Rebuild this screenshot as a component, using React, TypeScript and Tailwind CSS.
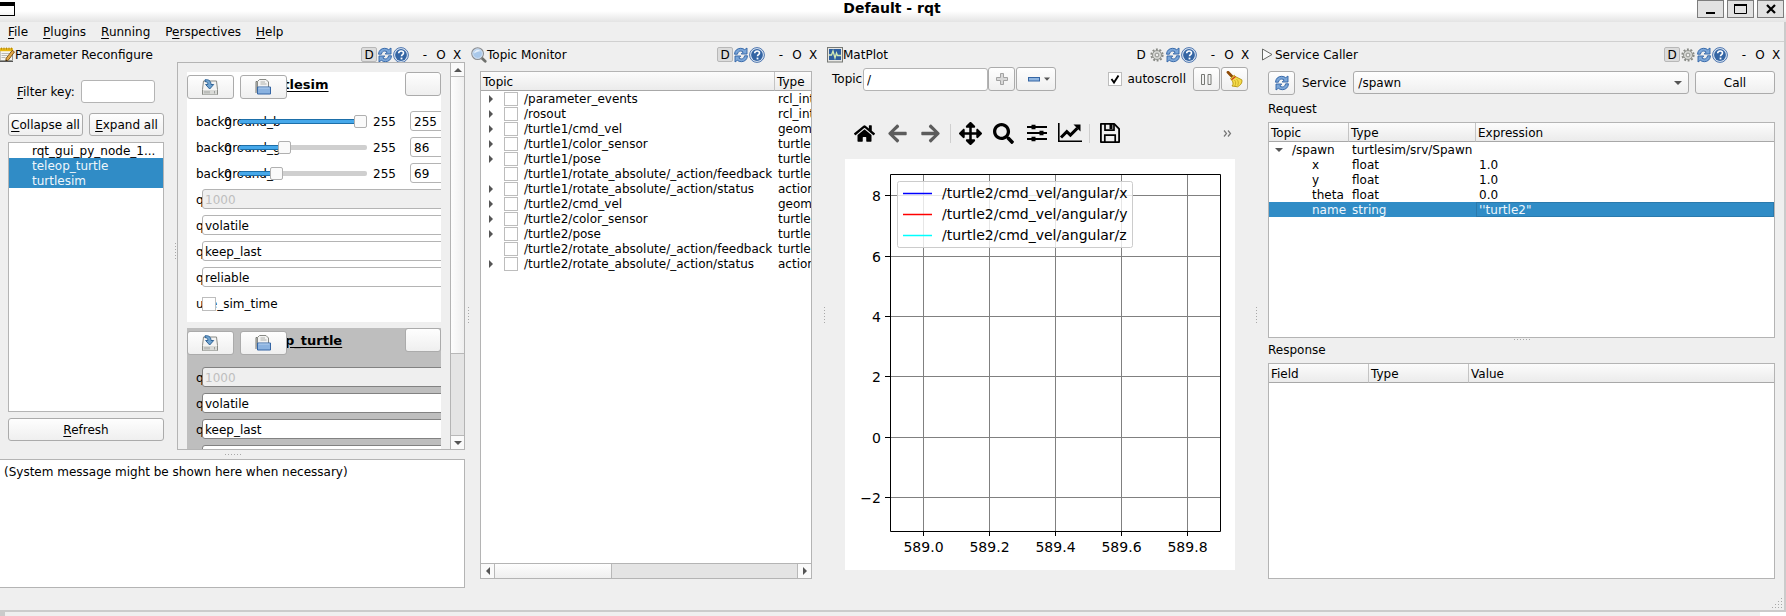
import React from "react";
import { FaHome, FaArrowLeft, FaArrowRight, FaArrowsAlt, FaSearch } from "react-icons/fa";

/* ---------- icons ---------- */

const RefreshIcon = () => (
  <svg width="16" height="16" viewBox="0 0 16 16" aria-hidden="true">
    <path d="M1.5 7.2C1.7 3.4 4.4 1.3 7.6 1.3c1.7 0 3 .5 4.1 1.4L14 1v6H8.2l2-2c-.8-.6-1.6-.9-2.6-.9-1.7 0-2.8 1.1-3.2 3.1z" fill="#7ba6d8" stroke="#2f62a5" strokeWidth="0.9" />
    <path d="M14.5 8.8c-.2 3.8-2.9 5.9-6.1 5.9-1.7 0-3-.5-4.1-1.4L2 15V9h5.8l-2 2c.8.6 1.6.9 2.6.9 1.7 0 2.8-1.1 3.2-3.1z" fill="#7ba6d8" stroke="#2f62a5" strokeWidth="0.9" />
  </svg>
);

const HelpIcon = () => (
  <svg width="16" height="16" viewBox="0 0 16 16" aria-hidden="true">
    <circle cx="8" cy="8" r="7.4" fill="#dfe8f4" stroke="#3b68a6" strokeWidth="0.9" />
    <circle cx="8" cy="8" r="5.9" fill="#3465a4" />
    <path d="M5.7 6.2c0-1.4 1-2.2 2.4-2.2s2.4.8 2.4 2c0 1.6-2 1.7-2 3.3" fill="none" stroke="#fff" strokeWidth="1.6" />
    <rect x="7.6" y="10.6" width="1.8" height="1.8" fill="#fff" />
  </svg>
);

const GearIcon = () => (
  <svg width="14" height="14" viewBox="0 0 14 14" aria-hidden="true">
    <circle cx="7" cy="7" r="5.6" fill="none" stroke="#888a85" strokeWidth="2" strokeDasharray="1.9 1.62" />
    <circle cx="7" cy="7" r="4.5" fill="#d6d7d4" stroke="#888a85" strokeWidth="0.9" />
    <circle cx="7" cy="7" r="1.9" fill="#efefef" stroke="#888a85" strokeWidth="0.9" />
  </svg>
);

const NotepadIcon = () => (
  <svg width="15" height="16" viewBox="0 0 15 16" aria-hidden="true">
    <path d="M0 2h12.5v11.5H0z" fill="#f5f5f2" stroke="#8b8d88" strokeWidth="0.9" />
    <path d="M0 1.2h13v3H0z" fill="#e9b913" />
    <path d="M1.5 .6v2M4 .6v2M6.5 .6v2M9 .6v2M11.5 .6v2" stroke="#b8860b" strokeWidth="1" />
    <path d="M1.5 6.5h8M1.5 8.5h6M1.5 10.5h4" stroke="#a9aba6" strokeWidth="0.8" />
    <path d="M12.2 3.4l2.3 1.5-6 8-2.8 1.5.5-3.2z" fill="#e2a94a" stroke="#7a4f10" strokeWidth="0.9" />
    <path d="M5.7 14.4l.3-1.8 1.2.9z" fill="#222" />
    <path d="M0 14.5h13" stroke="#555" strokeWidth="1" />
  </svg>
);

const MagnifierIcon = () => (
  <svg width="16" height="16" viewBox="0 0 16 16" aria-hidden="true">
    <path d="M10.8 11l3.400 3.200" stroke="#6f716d" strokeWidth="2.800" strokeLinecap="round" />
    <circle cx="6.6" cy="6.6" r="5.8" fill="#a9c8ea" stroke="#8b8d90" strokeWidth="1.2" />
    <circle cx="6.6" cy="6.6" r="4.800" fill="none" stroke="#dfe9f4" strokeWidth="0.8" />
    <path d="M3 6.500a3.800 3.800 0 0 1 6.800-2.300C7.500 4 5 5 3 6.500z" fill="#e4effa" />
  </svg>
);

const MonitorIcon = () => (
  <svg width="16" height="16" viewBox="0 0 16 16" aria-hidden="true">
    <rect x="0.5" y="0.5" width="15" height="14.500" fill="#e6e6e4" stroke="#777975" />
    <rect x="2" y="2" width="12" height="11" fill="#2e5f9e" />
    <path d="M2 8h2.500l1.500-4 2 7 1.500-5 1 2.500H14" fill="none" stroke="#d3ebb4" strokeWidth="1.300" />
  </svg>
);

const PlayIcon = () => (
  <svg width="16" height="16" viewBox="0 0 16 16" aria-hidden="true">
    <path d="M3.500 2v11L13 7.500z" fill="#fafafa" stroke="#666864" strokeWidth="1" />
  </svg>
);

const SaveToDiskIcon = () => (
  <svg width="16" height="16" viewBox="0 0 16 16" aria-hidden="true">
    <path d="M1.500 2h13l1 8.500v5H.5v-5z" fill="#f4f4f3" stroke="#888a85" />
    <path d="M1 11h14v4.500H1z" fill="#d9dad7" />
    <path d="M3 12v2.500M5 12v2.500M7 12v2.500M12.500 12v2.500" stroke="#9a9c98" strokeWidth="0.9" />
    <path d="M3 .8c3.500-.6 6 1 6 4.700h2.700L7.700 10 3.600 5.500h2.300C5.900 3.600 5 2.600 3 2.600z" fill="#6fa3d0" stroke="#245a91" strokeWidth="0.9" />
  </svg>
);

const OpenFileIcon = () => (
  <svg width="16" height="16" viewBox="0 0 16 16" aria-hidden="true">
    <path d="M1 14V2.500h3.500" fill="#c9cac7" stroke="#777975" />
    <path d="M2.500 14V2.500l2-2h6.500l2.500 2.500V14z" fill="#f3f3f2" stroke="#888a85" />
    <path d="M5.500 3h4.500M5.500 5h6" stroke="#a9aba6" strokeWidth="0.9" />
    <path d="M2.500 8h13v7h-13z" fill="#8ab2e0" stroke="#3465a4" />
    <path d="M3.500 9h11" stroke="#b5d0ee" />
  </svg>
);

const PlusIcon = () => (
  <svg width="12" height="12" viewBox="0 0 12 12" aria-hidden="true">
    <path d="M4.500.5h3v4h4v3h-4v4h-3v-4h-4v-3h4z" fill="#d8d8d8" stroke="#a2a2a2" />
  </svg>
);

const MinusIcon = () => (
  <svg width="12" height="5" viewBox="0 0 12 5" className="shrink-0" aria-hidden="true">
    <rect x="0.500" y="0.500" width="11" height="3.500" fill="#8fb5e0" stroke="#3465a4" />
  </svg>
);

const PauseIcon = () => (
  <svg width="11" height="11" viewBox="0 0 11 11" aria-hidden="true">
    <path d="M.5.5h3v10h-3zM7 .5h3v10H7z" fill="#f2f2f2" stroke="#777975" />
  </svg>
);

const BroomIcon = () => (
  <svg width="17" height="17" viewBox="0 0 17 17" aria-hidden="true">
    <path d="M2 1.300l4.500 4.700" stroke="#8f4a06" strokeWidth="2.800" strokeLinecap="round" />
    <path d="M4.500 7.500l3.800-3.200 1.500 1.500 6 3c.8 3-1.500 5.700-4.300 7L6 15c1.800-2 .9-4 .2-5.200z" fill="#f3dc4b" stroke="#b5930b" strokeWidth="0.9" />
    <path d="M5.500 8.800l4-3.300" stroke="#cc3b1c" strokeWidth="1.300" />
    <path d="M8.500 9c1.500 1.800 1.500 4 .3 6M10.500 8c2 1.800 2.300 4 1.200 6.500" fill="none" stroke="#c5a21a" strokeWidth="0.8" />
  </svg>
);

const SubplotsIcon = () => (
  <svg width="20" height="18" viewBox="0 0 20 18" aria-hidden="true">
    <path d="M0 3h20M0 9h20M0 15h20" stroke="#000" strokeWidth="1.800" />
    <path d="M4.500.7h4v4.600h-4zM12.500 6.700h4v4.600h-4zM4.500 12.700h4v4.600h-4z" fill="#000" />
  </svg>
);

const LineChartIcon = () => (
  <svg width="24" height="20" viewBox="0 0 24 20" aria-hidden="true">
    <path d="M.8 0v18.200H24" fill="none" stroke="#000" strokeWidth="1.600" />
    <path d="M3 14.500l5.800-5.800 3.600 3.400 7-7" fill="none" stroke="#000" strokeWidth="3" />
    <path d="M15.500 1.500h7v7z" fill="#000" />
  </svg>
);

const FloppyIcon = () => (
  <svg width="20" height="20" viewBox="0 0 20 20" aria-hidden="true">
    <path d="M.9.9h13.300l4.900 4.900v13.300H.9z" fill="none" stroke="#000" strokeWidth="1.800" strokeLinejoin="round" />
    <path d="M5 1v6.200h9V1M4.800 19v-6.800h10.400V19" fill="none" stroke="#000" strokeWidth="1.700" />
    <path d="M9.500 1h3v5h-3z" fill="#000" />
  </svg>
);

const paths = {
  up: "M0 5L4 1L8 5z",
  down: "M0 1L4 5L8 1z",
  left: "M5 0L1 4L5 8z",
  right: "M1 0L5 4L1 8z",
};

function Arrow({ dir, className = "" }: { dir: keyof typeof paths; className?: string }) {
  const vertical = dir === "up" || dir === "down";
  return (
    <svg
      width={vertical ? 8 : 6}
      height={vertical ? 6 : 8}
      viewBox={vertical ? "0 0 8 6" : "0 0 6 8"}
      className={className}
      aria-hidden="true"
    >
      <path d={paths[dir]} fill="#555" />
    </svg>
  );
}

/* ---------- shared controls ---------- */

const face = "border border-[#ababab] rounded-[3px] bg-linear-to-b from-[#fefefe] to-[#efefef]";
const field = "border border-[#b4b4b4] rounded-[3px] bg-white px-[3px] pt-[2px] outline-none";

function Button({ className = "", children, label }: { className?: string; children?: React.ReactNode; label?: string }) {
  return (
    <button type="button" aria-label={label} className={`flex items-center justify-center ${face} ${className}`}>
      {children}
    </button>
  );
}

function Mnemonic({ k, rest }: { k: string; rest: string }) {
  return (
    <span className="pt-[2px] whitespace-nowrap">
      <u className="underline-offset-2">{k}</u>
      {rest}
    </span>
  );
}

function CheckBox({ id, label, className = "" }: { id?: string; label?: string; className?: string }) {
  return (
    <input
      type="checkbox"
      id={id}
      aria-label={label}
      className={`block size-[14px] shrink-0 appearance-none border border-[#bdbdbd] bg-white ${className}`}
    />
  );
}

function Dots({ vertical = false, className = "" }: { vertical?: boolean; className?: string }) {
  return (
    <div className={`flex items-center justify-center gap-[2px] ${vertical ? "flex-col" : ""} ${className}`}>
      {[0, 1, 2, 3, 4, 5].map((i) => (
        <span key={i} className="size-px bg-[#a8a8a8]" />
      ))}
    </div>
  );
}

function DockHeader({ icon, title, gear = false, pressed = true }: { icon: React.ReactNode; title: string; gear?: boolean; pressed?: boolean }) {
  return (
    <header className="flex h-5 shrink-0 items-start pt-[5px]">
      <div className="flex h-[15px] items-center">
        {icon}
        <h2 className="pt-[2px]">{title}</h2>
      </div>
      <div className="ml-auto flex h-[15px] [&>button]:flex [&>button]:h-[15px] [&>button]:w-4 [&>button]:items-center [&>button]:justify-center">
        <button type="button" className={pressed ? "rounded-[2px] border border-[#b8b8b8] bg-[#dcdcdc]" : ""}>
          <span className="pt-[2px]">D</span>
        </button>
        {gear && (
          <button type="button" aria-label="Settings"><GearIcon /></button>
        )}
        <button type="button" aria-label="Reload"><RefreshIcon /></button>
        <button type="button" aria-label="Help" className="mr-2"><HelpIcon /></button>
        <button type="button"><span className="pt-[2px]">-</span></button>
        <button type="button"><span className="pt-[2px]">O</span></button>
        <button type="button"><span className="pt-[2px]">X</span></button>
      </div>
    </header>
  );
}

const headCell = "h-[19px] border-b border-b-[#a8a8a8] bg-linear-to-b from-[#fcfcfc] to-[#ebebeb] pt-[2px] pl-[2px] text-left font-normal";
const headSplit = "border-r border-r-[#c4c4c4]";

const Cell = ({ children }: { children: React.ReactNode }) => (
  <div className="h-[15px] pt-px whitespace-nowrap">{children}</div>
);

/* ---------- window frame ---------- */

function TitleBar() {
  const btn = "flex h-[18px] w-[27px] items-center justify-center border border-[#7d7d7d] bg-[#e2e2e2]";
  return (
    <div className="flex h-[22px] shrink-0 items-start bg-linear-to-b from-white from-50% to-[#e4e4e4]">
      <div className="flex flex-1 pt-[2px]">
        <svg width="15" height="14" viewBox="0 0 15 14" aria-hidden="true">
          <path d="M0 0h15v14H0v-1h14V4H0z" fill="#000" />
        </svg>
      </div>
      <h1 className="text-[14px] leading-4 font-bold">Default - rqt</h1>
      <div className="flex flex-1 justify-end gap-[3px] pr-[2px]">
        <button type="button" aria-label="Minimize" className={btn}>
          <svg width="11" height="10" viewBox="0 0 11 10"><path d="M1 8h9v2H1z" /></svg>
        </button>
        <button type="button" aria-label="Maximize" className={btn}>
          <svg width="13" height="10" viewBox="0 0 13 10"><path d="M.5 1.500h12v8H.5z" fill="none" stroke="#000" /><path d="M0 0h13v2H0z" /></svg>
        </button>
        <button type="button" aria-label="Close" className={btn}>
          <svg width="10" height="10" viewBox="0 0 10 10"><path d="M1 1l8 8M9 1l-8 8" stroke="#000" strokeWidth="2.200" /></svg>
        </button>
      </div>
    </div>
  );
}

const menus = [
  ["", "F", "ile"],
  ["", "P", "lugins"],
  ["", "R", "unning"],
  ["P", "e", "rspectives"],
  ["", "H", "elp"],
];

function MenuBar() {
  return (
    <nav className="flex h-5 shrink-0 items-center gap-[15px] border-b border-[#d0d0d0] pt-[2px] pl-2">
      {menus.map(([a, k, b]) => (
        <button type="button" key={a + k + b}>
          {a}
          <u className="underline-offset-2">{k}</u>
          {b}
        </button>
      ))}
    </nav>
  );
}

/* ---------- Parameter Reconfigure ---------- */

type Param =
  | { kind: "range"; name: string; value: number }
  | { kind: "text"; name: string; value: string; disabled?: boolean }
  | { kind: "bool"; name: string };

const qos: Param[] = [
  { kind: "text", name: "depth", value: "1000", disabled: true },
  { kind: "text", name: "durability", value: "volatile" },
  { kind: "text", name: "history", value: "keep_last" },
  { kind: "text", name: "reliability", value: "reliable" },
];

function ParamRow({ param, node, dark }: { param: Param; node: string; dark?: boolean }) {
  const layer = "col-start-1 row-start-1";
  const id = `${node}-${param.name}`;
  const edge = dark ? "border-[#828282]" : "border-[#b4b4b4]";
  return (
    <div className="grid h-[26px] w-[300px] grid-cols-1 items-center">
      <label htmlFor={id} className={`${layer} pt-[2px] pl-[9px]`}>
        {param.kind === "text" ? "q" : param.name}
      </label>
      {param.kind === "range" && (
        <div className={`${layer} flex items-center pl-[37px]`}>
          <span className="w-[15px] pt-[2px]">0</span>
          <input
            id={id}
            type="range"
            min={0}
            max={255}
            defaultValue={param.value}
            style={{ "--fill": `${(param.value / 255) * 100}%` } as React.CSSProperties}
            className="h-[14px] w-[128px] appearance-none bg-transparent [&::-webkit-slider-runnable-track]:h-[5px] [&::-webkit-slider-runnable-track]:rounded-[2px] [&::-webkit-slider-runnable-track]:bg-[linear-gradient(to_right,transparent_var(--fill),#cfcfcf_var(--fill)),linear-gradient(#1d6fa9_0,#1d6fa9_1px,#46a8ea_1px,#46a8ea_4px,#1d6fa9_4px)] [&::-webkit-slider-thumb]:-mt-[4px] [&::-webkit-slider-thumb]:size-[13px] [&::-webkit-slider-thumb]:appearance-none [&::-webkit-slider-thumb]:rounded-[2px] [&::-webkit-slider-thumb]:border [&::-webkit-slider-thumb]:border-[#b0b0b0] [&::-webkit-slider-thumb]:bg-[#fafafa]"
          />
          <span className="w-[43px] pt-[2px] pl-[6px]">255</span>
          <input aria-label={`${param.name} value`} defaultValue={param.value} className={`h-5 w-16 ${field}`} />
        </div>
      )}
      {param.kind === "text" && (
        <input
          id={id}
          defaultValue={param.value}
          disabled={param.disabled}
          className={`${layer} ml-[15px] h-5 rounded-[3px] border px-[2px] pt-[2px] ${edge} ${param.disabled ? "bg-[#efefef] text-[#bebebe]" : "bg-white"}`}
        />
      )}
      {param.kind === "bool" && <CheckBox id={id} className={`${layer} mt-[2px] ml-[15px]`} />}
    </div>
  );
}

function NodePanel({ name, params, dark }: { name: string; params: Param[]; dark?: boolean }) {
  const layer = "col-start-1 row-start-1";
  return (
    <section className={`shrink-0 overflow-hidden pb-[6px] ${dark ? "bg-[#bebebe]" : "bg-white"}`}>
      <div className="grid h-9 grid-cols-1">
        <h3 className={`${layer} pt-[5px] pr-[38px] text-center text-[13px] leading-4 font-bold underline underline-offset-2`}>
          {name}
        </h3>
        <div className={`${layer} flex items-start gap-[6px] pt-[3px]`}>
          <Button label="Save parameters" className="h-6 w-[47px] pr-px"><SaveToDiskIcon /></Button>
          <Button label="Load parameters" className="h-6 w-[47px] pr-px"><OpenFileIcon /></Button>
          <Button label="Close node" className="-mt-[3px] ml-auto h-6 w-9" />
        </div>
      </div>
      {params.map((p) => (
        <ParamRow key={p.name} param={p} node={name} dark={dark} />
      ))}
    </section>
  );
}

function ParameterDock() {
  const node = "h-[15px] pt-px pl-[23px]";
  return (
    <section className="grid min-h-0 grid-cols-1 grid-rows-[20px_minmax(0,388fr)_9px_minmax(0,129fr)]">
      <DockHeader icon={<NotepadIcon />} title="Parameter Reconfigure" />
      <div className="grid min-h-0 grid-cols-[minmax(0,177fr)_minmax(0,288fr)] grid-rows-1">
        <div className="flex min-h-0">
          <div className="flex min-w-0 flex-1 flex-col pt-[18px] pb-[9px] pl-2">
            <div className="mb-[10px] flex items-center gap-[6px] px-[9px]">
              <label htmlFor="filter" className="flex"><Mnemonic k="F" rest="ilter key:" /></label>
              <input id="filter" className={`h-[23px] min-w-0 flex-1 ${field}`} />
            </div>
            <div className="mb-[6px] grid grid-cols-2 gap-[6px]">
              <Button className="h-[23px]"><Mnemonic k="C" rest="ollapse all" /></Button>
              <Button className="h-[23px]"><Mnemonic k="E" rest="xpand all" /></Button>
            </div>
            <ul className="mb-[6px] min-h-0 flex-1 border border-[#b4b4b4] bg-white">
              <li className={node}>rqt_gui_py_node_1...</li>
              <li className={`${node} bg-[#308cc6] text-[#eff6fb]`}>teleop_turtle</li>
              <li className={`${node} bg-[#308cc6] text-[#eff6fb]`}>turtlesim</li>
            </ul>
            <Button className="h-[23px]"><Mnemonic k="R" rest="efresh" /></Button>
          </div>
          <Dots vertical className="ml-[10px] w-[3px] pb-[10px]" />
        </div>
        <div className="flex min-h-0 border border-[#b4b4b4]">
          <div className="flex min-w-0 flex-1 flex-col gap-[6px] overflow-hidden px-[9px] pt-[9px]">
            <NodePanel
              name="turtlesim"
              params={[
                { kind: "range", name: "background_b", value: 255 },
                { kind: "range", name: "background_g", value: 86 },
                { kind: "range", name: "background_r", value: 69 },
                ...qos,
                { kind: "bool", name: "use_sim_time" },
              ]}
            />
            <NodePanel name="teleop_turtle" params={qos} dark />
          </div>
          <div className="flex w-[14px] shrink-0 flex-col border-l border-[#b4b4b4] bg-[#e4e4e4]">
            <button type="button" aria-label="Scroll up" className="flex h-[13px] items-center justify-center bg-[#fafafa]"><Arrow dir="up" /></button>
            <div className="flex-[278] border-y border-[#b8b8b8] bg-linear-to-r from-[#fdfdfd] to-[#efefef]" />
            <div className="flex-[81]" />
            <button type="button" aria-label="Scroll down" className="flex h-[14px] items-center justify-center border-t border-[#b8b8b8] bg-[#fafafa]"><Arrow dir="down" /></button>
          </div>
        </div>
      </div>
      <Dots />
      <textarea
        readOnly
        aria-label="System messages"
        defaultValue="(System message might be shown here when necessary)"
        className="block h-full w-full resize-none border border-l-0 border-[#b4b4b4] bg-white py-[5px] pl-1 outline-none"
      />
    </section>
  );
}

/* ---------- Topic Monitor ---------- */

const topics: [string, string, boolean][] = [
  ["/parameter_events", "rcl_interfaces", true],
  ["/rosout", "rcl_interfaces", true],
  ["/turtle1/cmd_vel", "geometry_msgs", true],
  ["/turtle1/color_sensor", "turtlesim", true],
  ["/turtle1/pose", "turtlesim", true],
  ["/turtle1/rotate_absolute/_action/feedback", "turtlesim", false],
  ["/turtle1/rotate_absolute/_action/status", "action_msgs", true],
  ["/turtle2/cmd_vel", "geometry_msgs", true],
  ["/turtle2/color_sensor", "turtlesim", true],
  ["/turtle2/pose", "turtlesim", true],
  ["/turtle2/rotate_absolute/_action/feedback", "turtlesim", false],
  ["/turtle2/rotate_absolute/_action/status", "action_msgs", true],
];

function TopicDock() {
  return (
    <section className="flex min-h-0 flex-col">
      <DockHeader icon={<MagnifierIcon />} title="Topic Monitor" />
      <div className="m-[9px] flex min-h-0 flex-1 flex-col border border-[#b4b4b4] bg-white">
        <div className="min-h-0 flex-1 overflow-hidden">
          <table className="w-full table-fixed border-separate border-spacing-0">
            <thead>
              <tr>
                <th className={`w-[294px] ${headCell} ${headSplit}`}>Topic</th>
                <th className={headCell}>Type</th>
              </tr>
            </thead>
            <tbody>
              {topics.map(([name, type, open]) => (
                <tr key={name} className="h-[15px]">
                  <td className="whitespace-nowrap">
                    <span className="flex h-[15px] items-center pl-[7px]">
                      <span className="w-4">{open && <Arrow dir="right" />}</span>
                      <CheckBox label={name} />
                      <span className="pt-[2px] pl-[6px]">{name}</span>
                    </span>
                  </td>
                  <td className="overflow-hidden pl-[3px]"><Cell>{type}</Cell></td>
                </tr>
              ))}
            </tbody>
          </table>
        </div>
        <div className="flex h-[15px] shrink-0 border-t border-[#b4b4b4] bg-[#e4e4e4]">
          <button type="button" aria-label="Scroll left" className="flex w-[13px] items-center justify-center bg-[#fafafa]"><Arrow dir="left" /></button>
          <div className="flex-[117] border-x border-[#b8b8b8] bg-linear-to-b from-[#fdfdfd] to-[#efefef]" />
          <div className="flex-[186]" />
          <button type="button" aria-label="Scroll right" className="flex w-[14px] items-center justify-center border-l border-[#b8b8b8] bg-[#fafafa]"><Arrow dir="right" /></button>
        </div>
      </div>
    </section>
  );
}

/* ---------- MatPlot ---------- */

const xTicks: [number, string][] = [
  [78.5, "589.0"],
  [144.5, "589.2"],
  [210.5, "589.4"],
  [276.5, "589.6"],
  [342.5, "589.8"],
];
const yTicks: [number, string][] = [
  [36.5, "8"],
  [97.5, "6"],
  [157.5, "4"],
  [217.5, "2"],
  [278.5, "0"],
  [338.5, "−2"],
];
const series: [number, string, string][] = [
  [34.5, "#0000ff", "/turtle2/cmd_vel/angular/x"],
  [55.5, "#ff0000", "/turtle2/cmd_vel/angular/y"],
  [76.5, "#00ffff", "/turtle2/cmd_vel/angular/z"],
];

function Plot() {
  return (
    <svg viewBox="0 0 390 411" className="block h-full w-full bg-white text-[14px]" role="img" aria-label="Plot">
      {xTicks.map(([x, t]) => (
        <g key={t}>
          <path d={`M${x} 15V372`} stroke="#808080" />
          <path d={`M${x} 372v5`} stroke="#000" />
          <text x={x} y="393" textAnchor="middle">{t}</text>
        </g>
      ))}
      {yTicks.map(([y, t]) => (
        <g key={t}>
          <path d={`M45 ${y}H375`} stroke="#808080" />
          <path d={`M40 ${y}h5`} stroke="#000" />
          <text x="36" y={y + 5} textAnchor="end">{t}</text>
        </g>
      ))}
      <path d="M45.500 15.500h330v357h-330z" fill="none" stroke="#000" />
      <rect x="52.500" y="22.500" width="235" height="66" rx="2" fill="#fff" fillOpacity="0.8" stroke="#ccc" />
      {series.map(([y, color, name]) => (
        <g key={name}>
          <path d={`M58 ${y}h29`} stroke={color} strokeWidth="1.500" />
          <text x="97" y={y + 4}>{name}</text>
        </g>
      ))}
    </svg>
  );
}

function PlotDock() {
  const tool = "flex h-8 w-[33px] items-center justify-center";
  const rule = "mx-[3px] h-[19px] w-px bg-[#cfcfcf]";
  return (
    <section className="flex min-h-0 flex-col">
      <DockHeader icon={<MonitorIcon />} title="MatPlot" gear pressed={false} />
      <div className="flex shrink-0 items-center px-[5px] pt-[5px]">
        <label htmlFor="plot-topic" className="w-[31px] pt-px">Topic</label>
        <input id="plot-topic" defaultValue="/" className={`h-[23px] w-[125px] ${field}`} />
        <Button label="Add topic" className="h-6 w-[27px]"><PlusIcon /></Button>
        <Button label="Remove topic" className="ml-px h-6 w-10 gap-1 pl-[6px]">
          <MinusIcon />
          <svg width="6" height="4" viewBox="0 0 6 4" className="shrink-0" aria-hidden="true"><path d="M0 .5h6L3 3.800z" fill="#555" /></svg>
        </Button>
        <div className="ml-auto grid">
          <input id="autoscroll" type="checkbox" defaultChecked className="col-start-1 row-start-1 block size-[14px] appearance-none border border-[#bdbdbd] bg-white" />
          <svg width="14" height="14" viewBox="0 0 14 14" className="pointer-events-none col-start-1 row-start-1" aria-hidden="true">
            <path d="M3.500 7l2.500 3.500 4.500-7" fill="none" stroke="#000" strokeWidth="1.900" />
          </svg>
        </div>
        <label htmlFor="autoscroll" className="mr-[7px] ml-[5px]">autoscroll</label>
        <Button label="Pause" className="mr-px h-6 w-[27px]"><PauseIcon /></Button>
        <Button label="Clear plot" className="h-6 w-[27px]"><BroomIcon /></Button>
      </div>
      <div className="mt-4 flex h-[52px] shrink-0 items-center px-[21px]">
        <button type="button" aria-label="Home" className={tool}><FaHome size={21} /></button>
        <button type="button" aria-label="Back" className={`${tool} text-[#5c5c5c]`}><FaArrowLeft size={21} /></button>
        <button type="button" aria-label="Forward" className={`${tool} text-[#5c5c5c]`}><FaArrowRight size={21} /></button>
        <span className={rule} />
        <button type="button" aria-label="Pan" className={tool}><FaArrowsAlt size={23} /></button>
        <button type="button" aria-label="Zoom" className={tool}><FaSearch size={21} /></button>
        <button type="button" aria-label="Subplots" className={tool}><SubplotsIcon /></button>
        <button type="button" aria-label="Customize" className={tool}><LineChartIcon /></button>
        <span className={rule} />
        <button type="button" aria-label="Save figure" className={tool}><FloppyIcon /></button>
        <button type="button" aria-label="More tools" className="ml-auto">
          <svg width="9" height="7" viewBox="0 0 9 7" aria-hidden="true">
            <path d="M1 .5l2.500 3L1 6.500M5 .5l2.500 3L5 6.500" fill="none" stroke="#777" strokeWidth="1.200" />
          </svg>
        </button>
      </div>
      <div className="mx-[18px] mb-[18px] min-h-0 flex-1">
        <Plot />
      </div>
    </section>
  );
}

/* ---------- Service Caller ---------- */

const request: [string, string, string][] = [
  ["x", "float", "1.0"],
  ["y", "float", "1.0"],
  ["theta", "float", "0.0"],
  ["name", "string", "''turtle2\""],
];

function ServiceDock() {
  const frame = "min-h-0 overflow-hidden border border-[#b4b4b4] bg-white";
  return (
    <section className="flex min-h-0 flex-col">
      <DockHeader icon={<PlayIcon />} title="Service Caller" gear />
      <div className="grid min-h-0 flex-1 grid-cols-1 grid-rows-[24px_27px_minmax(0,1fr)_25px_minmax(0,1fr)] p-[9px]">
        <div className="flex items-start">
          <Button label="Reload services" className="mr-[7px] h-6 w-[27px]"><RefreshIcon /></Button>
          <label htmlFor="service" className="mr-[7px] pt-[5px]">Service</label>
          <div className="mr-[6px] grid min-w-0 flex-1 grid-cols-1 items-center">
            <select id="service" className={`col-start-1 row-start-1 h-[23px] appearance-none pt-px pl-1 ${face}`}>
              <option>/spawn</option>
            </select>
            <Arrow dir="down" className="pointer-events-none col-start-1 row-start-1 mr-[7px] justify-self-end" />
          </div>
          <Button className="h-[23px] w-20"><span className="pt-px">Call</span></Button>
        </div>
        <h3 className="self-center pt-[2px]">Request</h3>
        <div className={frame}>
          <table className="w-full table-fixed border-separate border-spacing-0">
            <thead>
              <tr>
                <th className={`w-20 ${headCell} ${headSplit}`}>Topic</th>
                <th className={`w-[127px] ${headCell} ${headSplit}`}>Type</th>
                <th className={headCell}>Expression</th>
              </tr>
            </thead>
            <tbody>
              <tr className="h-[15px]">
                <td>
                  <span className="flex h-[15px] items-center gap-[9px] pl-[6px]">
                    <Arrow dir="down" />
                    <span className="pt-[2px]">/spawn</span>
                  </span>
                </td>
                <td className="pl-[3px]"><Cell>turtlesim/srv/Spawn</Cell></td>
                <td />
              </tr>
              {request.map(([name, type, value]) => (
                <tr key={name} className={`h-[15px] ${name === "name" ? "bg-[#308cc6] text-[#eff6fb]" : ""}`}>
                  <td className="pl-[43px]"><Cell>{name}</Cell></td>
                  <td className="pl-[3px]"><Cell>{type}</Cell></td>
                  <td className={`pl-[3px] ${name === "name" ? "shadow-[inset_0_0_0_1px_#2a7aad]" : ""}`}><Cell>{value}</Cell></td>
                </tr>
              ))}
            </tbody>
          </table>
        </div>
        <div>
          <Dots className="h-[3px]" />
          <h3 className="pt-[2px]">Response</h3>
        </div>
        <div className={frame}>
          <table className="w-full table-fixed border-separate border-spacing-0">
            <thead>
              <tr>
                <th className={`w-[100px] ${headCell} ${headSplit}`}>Field</th>
                <th className={`w-[100px] ${headCell} ${headSplit}`}>Type</th>
                <th className={headCell}>Value</th>
              </tr>
            </thead>
          </table>
        </div>
      </div>
    </section>
  );
}

/* ---------- application ---------- */

export default function App() {
  return (
    <div className="flex h-screen flex-col overflow-hidden bg-[#efefef] font-['DejaVu_Sans',sans-serif] text-[12px] leading-[15px] text-black">
      <TitleBar />
      <div className="flex min-h-0 flex-1 flex-col border-r-2 border-b-2 border-[#cbcbcb]">
        <MenuBar />
        <main className="grid min-h-0 flex-1 grid-cols-[minmax(0,465fr)_6px_minmax(0,350fr)_6px_minmax(0,426fr)_6px_minmax(0,525fr)] grid-rows-1">
          <ParameterDock />
          <Dots vertical />
          <TopicDock />
          <Dots vertical />
          <PlotDock />
          <Dots vertical />
          <ServiceDock />
        </main>
        <footer className="flex h-[22px] shrink-0 items-end justify-end p-[2px]">
          <svg width="10" height="10" viewBox="0 0 10 10" aria-hidden="true">
            <path d="M9 0h1v1H9zM6 3h1v1H6zM9 3h1v1H9zM3 6h1v1H3zM6 6h1v1H6zM9 6h1v1H9zM0 9h1v1H0zM3 9h1v1H3zM6 9h1v1H6zM9 9h1v1H9z" fill="#a8a8a8" />
          </svg>
        </footer>
      </div>
      <div className="flex h-1 shrink-0">
        <div className="w-[5px] bg-[#cbcbcb]" />
        <div className="flex-1" />
        <div className="w-[26px] bg-white" />
      </div>
    </div>
  );
}
